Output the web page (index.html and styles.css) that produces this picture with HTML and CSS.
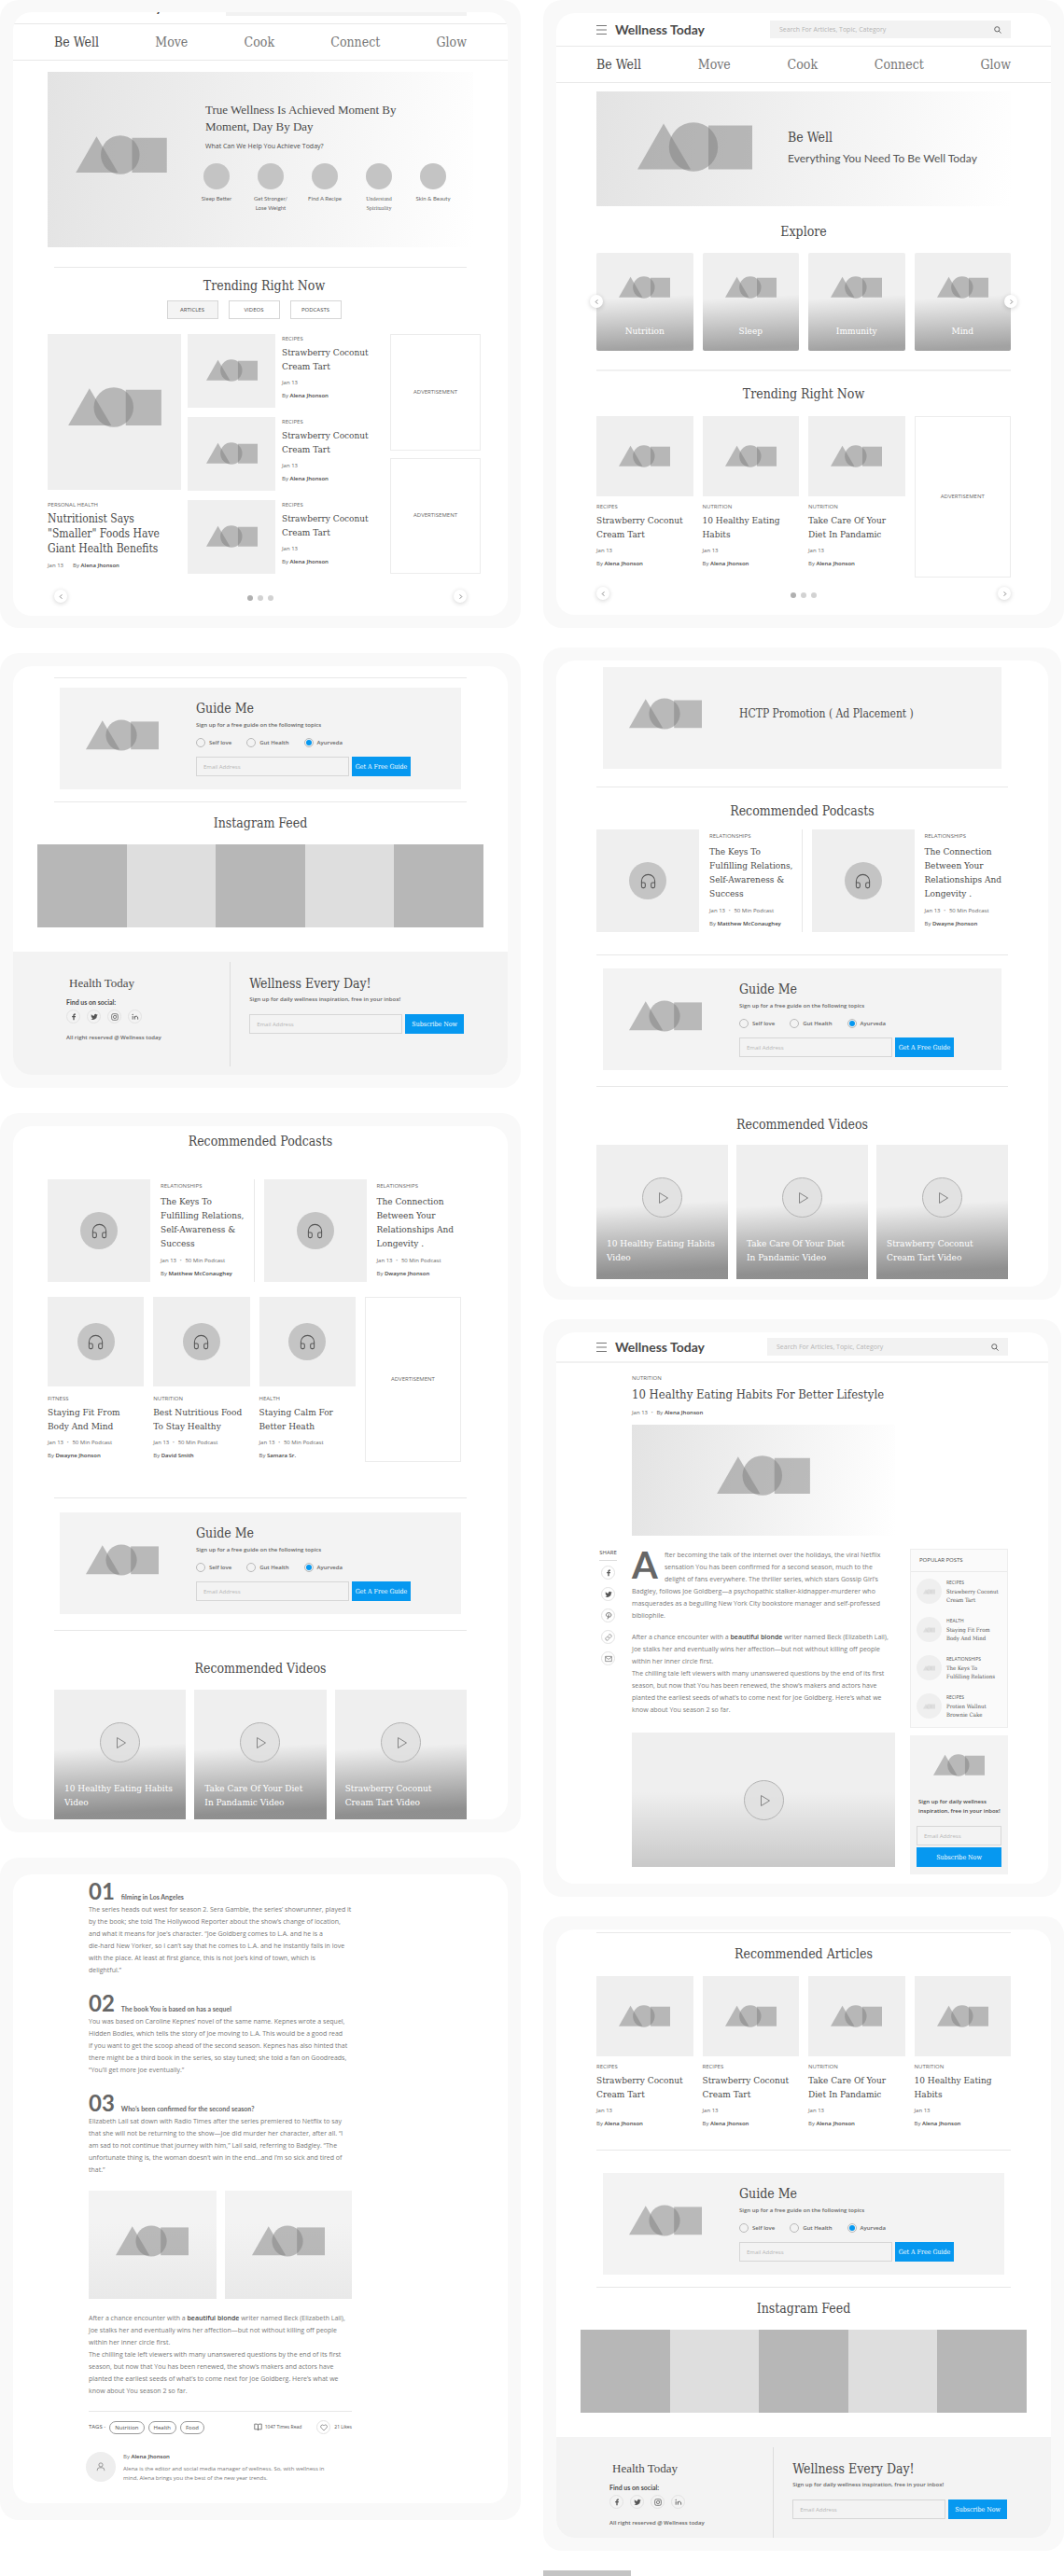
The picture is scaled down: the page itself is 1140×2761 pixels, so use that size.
FILE: index.html
```html
<!DOCTYPE html>
<html lang="en">
<head>
<meta charset="utf-8">
<meta name="viewport" content="width=device-width, initial-scale=1">
<title>Wellness Today</title>
<link rel="stylesheet" href="styles.css">
</head>
<body>
<svg class="sprite" aria-hidden="true">
  <symbol id="shapes" viewBox="0 0 123 53">
    <g fill="#7f7f7f" fill-opacity=".5"><path d="M0 50.500 28 1.500 57 50.500z"/><circle cx="60" cy="26.500" r="26.200"/><path d="M76 3.500h47v47H76z"/></g>
  </symbol>
  <symbol id="headphones" viewBox="0 0 24 24"><path d="M3 18v-6a9 9 0 0 1 18 0v6M21 19a2 2 0 0 1-2 2h-1a2 2 0 0 1-2-2v-3a2 2 0 0 1 2-2h3zM3 19a2 2 0 0 0 2 2h1a2 2 0 0 0 2-2v-3a2 2 0 0 0-2-2H3z" fill="none" stroke="currentColor" stroke-width="1.300"/></symbol>
  <symbol id="play" viewBox="0 0 43 43"><circle cx="21.500" cy="21.500" r="21" fill="#e0e0e0" fill-opacity=".9" stroke="#b3b3b3"/><path d="M18.500 16.500v11l9-5.500z" fill="none" stroke="#858585"/></symbol>
  <symbol id="left" viewBox="0 0 8 8"><path d="M5 1.500 2.500 4 5 6.500" fill="none" stroke="#777"/></symbol>
  <symbol id="right" viewBox="0 0 8 8"><path d="M3 1.500 5.500 4 3 6.500" fill="none" stroke="#777"/></symbol>
  <symbol id="menu" viewBox="0 0 11 10"><path d="M0 .5h11M0 5h11M0 9.500h11" stroke="#777" fill="none"/></symbol>
  <symbol id="search" viewBox="0 0 8 8"><circle cx="3.300" cy="3.300" r="2.600" fill="none" stroke="#555" stroke-width=".9"/><path d="m5.200 5.200 2.400 2.400" stroke="#555" stroke-width=".9"/></symbol>
  <symbol id="facebook" viewBox="0 0 24 24"><path fill="#555" d="M14 22v-9h3.500l.5-4h-4V6.700c0-1.200.4-1.700 1.800-1.700H18V1.400C17.500 1.300 16.400 1.200 15 1.200c-3 0-5 1.700-5 5V9H6.500v4H10v9z"/></symbol>
  <symbol id="twitter" viewBox="0 0 24 24"><path fill="#555" d="M23 4.900a9 9 0 0 1-2.600.7 4.500 4.500 0 0 0 2-2.500 9 9 0 0 1-2.900 1.100 4.500 4.500 0 0 0-7.700 4.100A12.800 12.800 0 0 1 2.500 3.600a4.500 4.500 0 0 0 1.400 6 4.500 4.500 0 0 1-2-.6c0 2.200 1.500 4.100 3.600 4.500a4.500 4.500 0 0 1-2 .1 4.500 4.500 0 0 0 4.200 3.100A9 9 0 0 1 1 18.600 12.800 12.800 0 0 0 20.700 7.200 9 9 0 0 0 23 4.900z"/></symbol>
  <symbol id="instagram" viewBox="0 0 24 24"><g fill="none" stroke="#555" stroke-width="2.200"><rect x="2" y="2" width="20" height="20" rx="5"/><circle cx="12" cy="12" r="4.800"/></g><circle cx="17.500" cy="6.500" r="1.400" fill="#555"/></symbol>
  <symbol id="linkedin" viewBox="0 0 24 24"><path d="M3.500 9v11M10 20V9M10 14.500c0-6 10-7 10 .5v5" fill="none" stroke="#555" stroke-width="2.600"/><circle cx="3.500" cy="4.500" r="1.900" fill="#555"/></symbol>
  <symbol id="pinterest" viewBox="0 0 24 24"><path d="M7 14C1 8 6 2 12.500 2S22 7 20 11.500s-7.500 5.500-8.500 2M13 7 9 22" fill="none" stroke="#555" stroke-width="2.600"/></symbol>
  <symbol id="link" viewBox="0 0 24 24"><path d="M10 13a5 5 0 0 0 7.500.5l3-3a5 5 0 0 0-7-7L11.800 5.200M14 11a5 5 0 0 0-7.500-.5l-3 3a5 5 0 0 0 7 7l1.700-1.700" fill="none" stroke="#666" stroke-width="2"/></symbol>
  <symbol id="mail" viewBox="0 0 24 24"><path d="M2 4h20v16H2zM2 6l10 7.500L22 6" fill="none" stroke="#666" stroke-width="2"/></symbol>
  <symbol id="book" viewBox="0 0 24 24"><path d="M2 3h6a4 4 0 0 1 4 4v14a3 3 0 0 0-3-3H2zM22 3h-6a4 4 0 0 0-4 4v14a3 3 0 0 1 3-3h7z" fill="none" stroke="#666" stroke-width="2.200"/></symbol>
  <symbol id="heart" viewBox="0 0 24 24"><path d="M20.800 4.600a5.500 5.500 0 0 0-7.700 0L12 5.700l-1.100-1.100a5.500 5.500 0 0 0-7.700 7.800L12 21.200l8.800-8.800a5.500 5.500 0 0 0 0-7.800z" fill="none" stroke="#666" stroke-width="2"/></symbol>
  <symbol id="user" viewBox="0 0 24 24"><path d="M3 22v-2a6 6 0 0 1 6-6h6a6 6 0 0 1 6 6v2" fill="none" stroke="#888" stroke-width="2"/><circle cx="12" cy="7" r="5" fill="none" stroke="#888" stroke-width="2"/></symbol>
</svg>

<main class="board">
<div class="column column--left">

  <section class="frame"><div class="screen pb-14">
    <header class="topbar topbar--scrolled">
      <button class="menu" aria-label="Menu"><svg><use href="#menu"/></svg></button>
      <span class="logo">Wellness Today</span>
      <div class="search" role="presentation"></div>
    </header>
    <nav class="nav"><a class="active" href="#">Be Well</a><a href="#">Move</a><a href="#">Cook</a><a href="#">Connect</a><a href="#">Glow</a></nav>
    <div class="hero hero--home">
      <div class="hero-art"><svg class="art"><use href="#shapes"/></svg></div>
      <div class="hero-text">
        <h1 class="display">True Wellness Is Achieved Moment By<br>Moment, Day By Day</h1>
        <p class="lead">What Can We Help You Achieve Today?</p>
        <ul class="goals">
          <li><i></i>Sleep Better</li>
          <li><i></i>Get Stronger/<br>Lose Weight</li>
          <li><i></i>Find A Recipe</li>
          <li class="serif"><i></i>Understand<br>Spirituality</li>
          <li><i></i>Skin &amp; Beauty</li>
        </ul>
      </div>
    </div>
    <hr class="mt-21">
    <h2 class="mt-9 shift">Trending Right Now</h2>
    <div class="tabs"><button class="on">ARTICLES</button><button>VIDEOS</button><button>PODCASTS</button></div>
    <div class="trending">
      <article class="card card--lead">
        <div class="thumb"><svg class="art art--lg"><use href="#shapes"/></svg></div>
        <p class="tag">PERSONAL HEALTH</p>
        <h3>Nutritionist Says<br>"Smaller" Foods Have<br>Giant Health Benefits</h3>
        <p class="meta"><span class="date">Jan 13</span>By <b>Alena Jhonson</b></p>
      </article>
      <div class="stack">
        <article class="side"><div class="thumb"><svg class="art art--sm"><use href="#shapes"/></svg></div><div class="card"><p class="tag">RECIPES</p><h3>Strawberry Coconut<br>Cream Tart</h3><p class="meta">Jan 13</p><p class="meta">By <b>Alena Jhonson</b></p></div></article>
        <article class="side"><div class="thumb"><svg class="art art--sm"><use href="#shapes"/></svg></div><div class="card"><p class="tag">RECIPES</p><h3>Strawberry Coconut<br>Cream Tart</h3><p class="meta">Jan 13</p><p class="meta">By <b>Alena Jhonson</b></p></div></article>
        <article class="side"><div class="thumb"><svg class="art art--sm"><use href="#shapes"/></svg></div><div class="card"><p class="tag">RECIPES</p><h3>Strawberry Coconut<br>Cream Tart</h3><p class="meta">Jan 13</p><p class="meta">By <b>Alena Jhonson</b></p></div></article>
      </div>
      <div class="ads"><aside class="ad">ADVERTISEMENT</aside><aside class="ad">ADVERTISEMENT</aside></div>
    </div>
    <div class="pager mt-17"><button class="round" aria-label="Previous"><svg><use href="#left"/></svg></button><span class="dots"><i class="on"></i><i></i><i></i></span><button class="round" aria-label="Next"><svg><use href="#right"/></svg></button></div>
  </div></section>

  <section class="frame"><div class="screen">
    <hr class="mt-12">
    <form class="guide mt-10">
      <svg class="art art--md"><use href="#shapes"/></svg>
      <div class="guide-body">
        <h2>Guide Me</h2>
        <p class="small">Sign up for a free guide on the following topics</p>
        <div class="radios"><label><input type="radio" name="topic1">Self love</label><label><input type="radio" name="topic1">Gut Health</label><label><input type="radio" name="topic1" checked>Ayurveda</label></div>
        <div class="field"><input type="email" placeholder="Email Address" aria-label="Email Address"><button>Get A Free Guide</button></div>
      </div>
    </form>
    <hr class="mt-13">
    <h2 class="mt-12">Instagram Feed</h2>
    <div class="feed"><i></i><i></i><i></i><i></i><i></i></div>
    <footer class="footer">
      <div class="footer-brand">
        <p class="brand">Health Today</p>
        <p class="find">Find us on social:</p>
        <div class="social"><a href="#" aria-label="Facebook"><svg><use href="#facebook"/></svg></a><a href="#" aria-label="Twitter"><svg><use href="#twitter"/></svg></a><a href="#" aria-label="Instagram"><svg><use href="#instagram"/></svg></a><a href="#" aria-label="LinkedIn"><svg><use href="#linkedin"/></svg></a></div>
        <p class="small">All right reserved @ Wellness today</p>
      </div>
      <form class="footer-news">
        <h2>Wellness Every Day!</h2>
        <p class="small">Sign up for daily wellness inspiration, free in your inbox!</p>
        <div class="field"><input type="email" placeholder="Email Address" aria-label="Email Address"><button>Subscribe Now</button></div>
      </form>
    </footer>
  </div></section>

  <section class="frame"><div class="screen">
    <h2 class="mt-6">Recommended Podcasts</h2>
    <div class="podcasts podcasts--wide mt-31">
      <article class="podcast"><div class="thumb"><span class="disc"><svg><use href="#headphones"/></svg></span></div><div class="card"><p class="tag">RELATIONSHIPS</p><h3>The Keys To<br>Fulfilling Relations,<br>Self-Awareness &amp;<br>Success</h3><p class="meta">Jan 13 <s>•</s> 50 Min Podcast</p><p class="meta">By <b>Matthew McConaughey</b></p></div></article>
      <article class="podcast"><div class="thumb"><span class="disc"><svg><use href="#headphones"/></svg></span></div><div class="card"><p class="tag">RELATIONSHIPS</p><h3>The Connection<br>Between Your<br>Relationships And<br>Longevity .</h3><p class="meta">Jan 13 <s>•</s> 50 Min Podcast</p><p class="meta">By <b>Dwayne Jhonson</b></p></div></article>
    </div>
    <div class="cards cards--podcasts">
      <article class="card"><div class="thumb"><span class="disc"><svg><use href="#headphones"/></svg></span></div><p class="tag">FITNESS</p><h3>Staying Fit From<br>Body And Mind</h3><p class="meta">Jan 13 <s>•</s> 50 Min Podcast</p><p class="meta">By <b>Dwayne Jhonson</b></p></article>
      <article class="card"><div class="thumb"><span class="disc"><svg><use href="#headphones"/></svg></span></div><p class="tag">NUTRITION</p><h3>Best Nutritious Food<br>To Stay Healthy</h3><p class="meta">Jan 13 <s>•</s> 50 Min Podcast</p><p class="meta">By <b>David Smith</b></p></article>
      <article class="card"><div class="thumb"><span class="disc"><svg><use href="#headphones"/></svg></span></div><p class="tag">HEALTH</p><h3>Staying Calm For<br>Better Heath</h3><p class="meta">Jan 13 <s>•</s> 50 Min Podcast</p><p class="meta">By <b>Samara Sr.</b></p></article>
      <aside class="ad">ADVERTISEMENT</aside>
    </div>
    <hr class="mt-38">
    <form class="guide mt-15">
      <svg class="art art--md"><use href="#shapes"/></svg>
      <div class="guide-body">
        <h2>Guide Me</h2>
        <p class="small">Sign up for a free guide on the following topics</p>
        <div class="radios"><label><input type="radio" name="topic2">Self love</label><label><input type="radio" name="topic2">Gut Health</label><label><input type="radio" name="topic2" checked>Ayurveda</label></div>
        <div class="field"><input type="email" placeholder="Email Address" aria-label="Email Address"><button>Get A Free Guide</button></div>
      </div>
    </form>
    <hr class="mt-17">
    <h2 class="mt-30">Recommended Videos</h2>
    <div class="videos videos--short">
      <a href="#" class="video"><svg class="play"><use href="#play"/></svg><span>10 Healthy Eating Habits<br>Video</span></a>
      <a href="#" class="video"><svg class="play"><use href="#play"/></svg><span>Take Care Of Your Diet<br>In Pandamic Video</span></a>
      <a href="#" class="video"><svg class="play"><use href="#play"/></svg><span>Strawberry Coconut<br>Cream Tart Video</span></a>
    </div>
  </div></section>

  <section class="frame frame--tall"><div class="screen story">
    <h4><em>01</em>filming in Los Angeles</h4>
    <p>The series heads out west for season 2. Sera Gamble, the series’ showrunner, played it<br>by the book; she told The Hollywood Reporter about the show’s change of location,<br>and what it means for Joe’s character. “Joe Goldberg comes to L.A. and he is a<br>die-hard New Yorker, so I can’t say that he comes to L.A. and he instantly falls in love<br>with the place. At least at first glance, this is not Joe’s kind of town, which is<br>delightful.”</p>
    <h4><em>02</em>The book You is based on has a sequel</h4>
    <p>You was based on Caroline Kepnes’ novel of the same name. Kepnes wrote a sequel,<br>Hidden Bodies, which tells the story of Joe moving to L.A. This would be a good read<br>if you want to get the scoop ahead of the second season. Kepnes has also hinted that<br>there might be a third book in the series, so stay tuned; she told a fan on Goodreads,<br>“You’ll get more Joe eventually.”</p>
    <h4><em>03</em>Who’s been confirmed for the second season?</h4>
    <p>Elizabeth Lail sat down with Radio Times after the series premiered to Netflix to say<br>that she will not be returning to the show—Joe did murder her character, after all. “I<br>am sad to not continue that journey with him,” Lail said, referring to Badgley. “The<br>unfortunate thing is, the woman doesn’t win in the end...and I’m so sick and tired of<br>that.”</p>
    <div class="pair"><div><svg class="art art--md"><use href="#shapes"/></svg></div><div><svg class="art art--md"><use href="#shapes"/></svg></div></div>
    <p>After a chance encounter with a <b>beautiful blonde</b> writer named Beck (Elizabeth Lail),<br>Joe stalks her and eventually wins her affection—but not without killing off people<br>within her inner circle first.<br>The chilling tale left viewers with many unanswered questions by the end of its first<br>season, but now that You has been renewed, the show’s makers and actors have<br>planted the earliest seeds of what’s to come next for Joe Goldberg. Here’s what we<br>know about You season 2 so far.</p>
    <div class="tagline">
      <span>TAGS -</span><a href="#" class="pill">Nutrition</a><a href="#" class="pill">Health</a><a href="#" class="pill">Food</a>
      <span class="reads"><svg><use href="#book"/></svg>1047 Times Read</span>
      <button class="like" aria-label="Like"><svg><use href="#heart"/></svg></button><span class="likes">21 Likes</span>
    </div>
    <div class="author">
      <span class="avatar"><svg><use href="#user"/></svg></span>
      <div><p class="by">By <b>Alena Jhonson</b></p><p class="bio">Alena is the editor and social media manager of wellness. So, with wellness in<br>mind, Alena brings you the best of the new year trends.</p></div>
    </div>
  </div></section>
</div>

<div class="column column--right">

  <section class="frame"><div class="screen pb-16">
    <header class="topbar">
      <button class="menu" aria-label="Menu"><svg><use href="#menu"/></svg></button>
      <span class="logo">Wellness Today</span>
      <label class="search"><input type="search" placeholder="Search For Articles, Topic, Category" aria-label="Search"><svg><use href="#search"/></svg></label>
    </header>
    <nav class="nav"><a class="active" href="#">Be Well</a><a href="#">Move</a><a href="#">Cook</a><a href="#">Connect</a><a href="#">Glow</a></nav>
    <div class="hero hero--topic">
      <svg class="art art--xl"><use href="#shapes"/></svg>
      <div><h1 class="slab">Be Well</h1><p class="subtitle">Everything You Need To Be Well Today</p></div>
    </div>
    <h2 class="mt-17">Explore</h2>
    <div class="explore">
      <button class="round" aria-label="Previous"><svg><use href="#left"/></svg></button>
      <a href="#" class="topic"><svg class="art art--sm"><use href="#shapes"/></svg><span>Nutrition</span></a>
      <a href="#" class="topic"><svg class="art art--sm"><use href="#shapes"/></svg><span>Sleep</span></a>
      <a href="#" class="topic"><svg class="art art--sm"><use href="#shapes"/></svg><span>Immunity</span></a>
      <a href="#" class="topic"><svg class="art art--sm"><use href="#shapes"/></svg><span>Mind</span></a>
      <button class="round round--next" aria-label="Next"><svg><use href="#right"/></svg></button>
    </div>
    <hr class="mt-20 thick">
    <h2 class="mt-14">Trending Right Now</h2>
    <div class="cards">
      <article class="card"><div class="thumb"><svg class="art art--sm"><use href="#shapes"/></svg></div><p class="tag">RECIPES</p><h3>Strawberry Coconut<br>Cream Tart</h3><p class="meta">Jan 13</p><p class="meta">By <b>Alena Jhonson</b></p></article>
      <article class="card"><div class="thumb"><svg class="art art--sm"><use href="#shapes"/></svg></div><p class="tag">NUTRITION</p><h3>10 Healthy Eating<br>Habits</h3><p class="meta">Jan 13</p><p class="meta">By <b>Alena Jhonson</b></p></article>
      <article class="card"><div class="thumb"><svg class="art art--sm"><use href="#shapes"/></svg></div><p class="tag">NUTRITION</p><h3>Take Care Of Your<br>Diet In Pandamic</h3><p class="meta">Jan 13</p><p class="meta">By <b>Alena Jhonson</b></p></article>
      <aside class="ad">ADVERTISEMENT</aside>
    </div>
    <div class="pager mt-10"><button class="round" aria-label="Previous"><svg><use href="#left"/></svg></button><span class="dots"><i class="on"></i><i></i><i></i></span><button class="round" aria-label="Next"><svg><use href="#right"/></svg></button></div>
  </div></section>

  <section class="frame frame--narrow"><div class="screen pb-8">
    <aside class="promo"><svg class="art art--md"><use href="#shapes"/></svg><h3>HCTP Promotion ( Ad Placement )</h3></aside>
    <hr class="mt-19">
    <h2 class="mt-15">Recommended Podcasts</h2>
    <div class="podcasts mt-10">
      <article class="podcast"><div class="thumb"><span class="disc"><svg><use href="#headphones"/></svg></span></div><div class="card"><p class="tag">RELATIONSHIPS</p><h3>The Keys To<br>Fulfilling Relations,<br>Self-Awareness &amp;<br>Success</h3><p class="meta">Jan 13 <s>•</s> 50 Min Podcast</p><p class="meta">By <b>Matthew McConaughey</b></p></div></article>
      <article class="podcast"><div class="thumb"><span class="disc"><svg><use href="#headphones"/></svg></span></div><div class="card"><p class="tag">RELATIONSHIPS</p><h3>The Connection<br>Between Your<br>Relationships And<br>Longevity .</h3><p class="meta">Jan 13 <s>•</s> 50 Min Podcast</p><p class="meta">By <b>Dwayne Jhonson</b></p></div></article>
    </div>
    <hr class="mt-24">
    <form class="guide mt-14">
      <svg class="art art--md"><use href="#shapes"/></svg>
      <div class="guide-body">
        <h2>Guide Me</h2>
        <p class="small">Sign up for a free guide on the following topics</p>
        <div class="radios"><label><input type="radio" name="topic3">Self love</label><label><input type="radio" name="topic3">Gut Health</label><label><input type="radio" name="topic3" checked>Ayurveda</label></div>
        <div class="field"><input type="email" placeholder="Email Address" aria-label="Email Address"><button>Get A Free Guide</button></div>
      </div>
    </form>
    <hr class="mt-17">
    <h2 class="mt-30">Recommended Videos</h2>
    <div class="videos">
      <a href="#" class="video"><svg class="play"><use href="#play"/></svg><span>10 Healthy Eating Habits<br>Video</span></a>
      <a href="#" class="video"><svg class="play"><use href="#play"/></svg><span>Take Care Of Your Diet<br>In Pandamic Video</span></a>
      <a href="#" class="video"><svg class="play"><use href="#play"/></svg><span>Strawberry Coconut<br>Cream Tart Video</span></a>
    </div>
  </div></section>

  <section class="frame frame--narrow"><div class="screen pb-10">
    <header class="topbar topbar--slim">
      <button class="menu" aria-label="Menu"><svg><use href="#menu"/></svg></button>
      <span class="logo">Wellness Today</span>
      <label class="search"><input type="search" placeholder="Search For Articles, Topic, Category" aria-label="Search"><svg><use href="#search"/></svg></label>
    </header>
    <div class="article-head">
      <p class="tag">NUTRITION</p>
      <h1 class="slab">10 Healthy Eating Habits For Better Lifestyle</h1>
      <p class="meta">Jan 13 <s>•</s> By <b>Alena Jhonson</b></p>
      <div class="hero hero--article"><svg class="art art--lg"><use href="#shapes"/></svg></div>
    </div>
    <div class="article-grid">
      <div class="share"><span>SHARE</span><a href="#" aria-label="Facebook"><svg><use href="#facebook"/></svg></a><a href="#" aria-label="Twitter"><svg><use href="#twitter"/></svg></a><a href="#" aria-label="Pinterest"><svg><use href="#pinterest"/></svg></a><a href="#" aria-label="Copy link"><svg><use href="#link"/></svg></a><a href="#" aria-label="Email"><svg><use href="#mail"/></svg></a></div>
      <div class="prose">
        <p><span class="dropcap">A</span>fter becoming the talk of the internet over the holidays, the viral Netflix<br>sensation You has been confirmed for a second season, much to the<br>delight of fans everywhere. The thriller series, which stars Gossip Girl’s<br>Badgley, follows Joe Goldberg—a psychopathic stalker-kidnapper-murderer who<br>masquerades as a beguiling New York City bookstore manager and self-professed<br>bibliophile.</p>
        <p>After a chance encounter with a <b>beautiful blonde</b> writer named Beck (Elizabeth Lail),<br>Joe stalks her and eventually wins her affection—but not without killing off people<br>within her inner circle first.<br>The chilling tale left viewers with many unanswered questions by the end of its first<br>season, but now that You has been renewed, the show’s makers and actors have<br>planted the earliest seeds of what’s to come next for Joe Goldberg. Here’s what we<br>know about You season 2 so far.</p>
        <a href="#" class="video video--article" aria-label="Play video"><svg class="play"><use href="#play"/></svg></a>
      </div>
      <aside class="sidebar">
        <div class="popular">
          <h4>POPULAR POSTS</h4>
          <ul>
            <li><span class="mini"><svg><use href="#shapes"/></svg></span><p><small>RECIPES</small>Strawberry Coconut<br>Cream Tart</p></li>
            <li><span class="mini"><svg><use href="#shapes"/></svg></span><p><small>HEALTH</small>Staying Fit From<br>Body And Mind</p></li>
            <li><span class="mini"><svg><use href="#shapes"/></svg></span><p><small>RELATIONSHIPS</small>The Keys To<br>Fulfilling Relations</p></li>
            <li><span class="mini"><svg><use href="#shapes"/></svg></span><p><small>RECIPES</small>Protien Wallnut<br>Brownie Cake</p></li>
          </ul>
        </div>
        <form class="signup">
          <svg class="art art--sm"><use href="#shapes"/></svg>
          <p>Sign up for daily wellness<br>inspiration, free in your inbox!</p>
          <div class="field field--stack"><input type="email" placeholder="Email Address" aria-label="Email Address"><button>Subscribe Now</button></div>
        </form>
      </aside>
    </div>
  </div></section>

  <section class="frame"><div class="screen">
    <hr class="mt-3">
    <h2 class="mt-12">Recommended Articles</h2>
    <div class="cards">
      <article class="card"><div class="thumb"><svg class="art art--sm"><use href="#shapes"/></svg></div><p class="tag">RECIPES</p><h3>Strawberry Coconut<br>Cream Tart</h3><p class="meta">Jan 13</p><p class="meta">By <b>Alena Jhonson</b></p></article>
      <article class="card"><div class="thumb"><svg class="art art--sm"><use href="#shapes"/></svg></div><p class="tag">RECIPES</p><h3>Strawberry Coconut<br>Cream Tart</h3><p class="meta">Jan 13</p><p class="meta">By <b>Alena Jhonson</b></p></article>
      <article class="card"><div class="thumb"><svg class="art art--sm"><use href="#shapes"/></svg></div><p class="tag">NUTRITION</p><h3>Take Care Of Your<br>Diet In Pandamic</h3><p class="meta">Jan 13</p><p class="meta">By <b>Alena Jhonson</b></p></article>
      <article class="card"><div class="thumb"><svg class="art art--sm"><use href="#shapes"/></svg></div><p class="tag">NUTRITION</p><h3>10 Healthy Eating<br>Habits</h3><p class="meta">Jan 13</p><p class="meta">By <b>Alena Jhonson</b></p></article>
    </div>
    <hr class="mt-21">
    <form class="guide mt-24">
      <svg class="art art--md"><use href="#shapes"/></svg>
      <div class="guide-body">
        <h2>Guide Me</h2>
        <p class="small">Sign up for a free guide on the following topics</p>
        <div class="radios"><label><input type="radio" name="topic4">Self love</label><label><input type="radio" name="topic4">Gut Health</label><label><input type="radio" name="topic4" checked>Ayurveda</label></div>
        <div class="field"><input type="email" placeholder="Email Address" aria-label="Email Address"><button>Get A Free Guide</button></div>
      </div>
    </form>
    <hr class="mt-13">
    <h2 class="mt-12">Instagram Feed</h2>
    <div class="feed"><i></i><i></i><i></i><i></i><i></i></div>
    <footer class="footer footer--flush">
      <div class="footer-brand">
        <p class="brand">Health Today</p>
        <p class="find">Find us on social:</p>
        <div class="social"><a href="#" aria-label="Facebook"><svg><use href="#facebook"/></svg></a><a href="#" aria-label="Twitter"><svg><use href="#twitter"/></svg></a><a href="#" aria-label="Instagram"><svg><use href="#instagram"/></svg></a><a href="#" aria-label="LinkedIn"><svg><use href="#linkedin"/></svg></a></div>
        <p class="small">All right reserved @ Wellness today</p>
      </div>
      <form class="footer-news">
        <h2>Wellness Every Day!</h2>
        <p class="small">Sign up for daily wellness inspiration, free in your inbox!</p>
        <div class="field"><input type="email" placeholder="Email Address" aria-label="Email Address"><button>Subscribe Now</button></div>
      </form>
    </footer>
  </div></section>
  <div class="tile"></div>
</div>
</main>
</body>
</html>
```
FILE: styles.css
```css
:root {
  --slab: "DejaVu Serif Condensed", "DejaVu Serif", serif;
  --sans: "Open Sans", "Noto Sans", sans-serif;
  --display: Lato, "Open Sans", sans-serif;
  --ink: #4a4a4a;
  --mid: #777;
  --line: #e8e8e8;
  --thumb: #efefef;
  --blue: #0698f0;
  --pad: 44px;
}

* { box-sizing: border-box; }
body { margin: 0; background: #fff; color: var(--ink); font: 7px/13px var(--sans); }
h1, h2, h3, h4, p, ul { margin: 0; padding: 0; font-weight: 400; }
ul { list-style: none; }
a { color: inherit; text-decoration: none; }
button, input { font: inherit; color: inherit; margin: 0; padding: 0; border: 0; background: none; }
button { cursor: pointer; white-space: nowrap; }
em, i { font-style: normal; }
s { text-decoration: none; color: #aaa; margin: 0 2px; }
b { font-weight: 600; color: #444; }
svg { display: block; }
.sprite { position: absolute; width: 0; height: 0; }

/* board */
.board { display: grid; grid-template-columns: minmax(0, 1fr) minmax(0, 1fr); gap: 24px; align-items: start; }
.column { display: flex; flex-direction: column; }
.column--left { gap: 27px; }
.column--right { gap: 21px; --pad: 43px; }
.frame { background: #f9f9f9; border-radius: 20px; padding: 14px; }
.column--left .frame:first-child { padding: 13px 14px; }
.frame--narrow { margin-right: 3px; }
.frame--tall { padding: 18px 14px; }
.screen { background: #fff; border-radius: 20px; overflow: hidden; display: flow-root; }
.tile { width: 94px; height: 6px; background: #c4c4c4; }

/* spacing steps */
.mt-3 { margin-top: 3px; } .mt-6 { margin-top: 6px; } .mt-9 { margin-top: 9px; }
.mt-10 { margin-top: 10px; } .mt-12 { margin-top: 12px; } .mt-13 { margin-top: 13px; }
.mt-14 { margin-top: 14px; } .mt-15 { margin-top: 15px; } .mt-17 { margin-top: 17px; }
.mt-19 { margin-top: 19px; } .mt-20 { margin-top: 20px; } .mt-21 { margin-top: 21px; }
.mt-24 { margin-top: 24px; } .mt-30 { margin-top: 30px; } .mt-31 { margin-top: 31px; }
.mt-38 { margin-top: 38px; }
.pb-8 { padding-bottom: 8px; } .pb-10 { padding-bottom: 10px; }
.pb-14 { padding-bottom: 14px; } .pb-16 { padding-bottom: 16px; }

hr { height: 1px; border: 0; background: var(--line); margin-bottom: 0; margin-left: var(--pad); margin-right: var(--pad); }
hr.thick { height: 2px; background: #f1f1f1; }
h2 { font: 14px/20px var(--slab); text-align: center; }
h2.shift { padding-left: 8px; }
h3 { font: 10px/15px var(--slab); white-space: nowrap; }

/* header */
.topbar { height: 36px; padding: 0 var(--pad); display: flex; align-items: center; border-bottom: 1px solid var(--line); }
.topbar--scrolled { margin-top: -23px; }
.topbar--slim { height: 33px; border-bottom: 2px solid #f1f1f1; }
.menu svg { width: 11px; height: 10px; }
.logo { font: 700 14px/20px var(--display); margin-left: 9px; }
.search { margin-left: auto; width: 258px; height: 19px; background: #f2f2f2; display: flex; align-items: center; padding: 0 10px; }
.search input { flex: 1; min-width: 0; outline: 0; appearance: none; }
.search svg { width: 8px; height: 8px; }
::placeholder { color: #b5b5b5; opacity: 1; }
.nav { height: 39px; padding: 0 var(--pad); display: flex; justify-content: space-between; align-items: center; border-bottom: 1px solid var(--line); font: 14px/20px var(--slab); color: var(--mid); }
.nav .active { color: var(--ink); }

/* artwork */
.art { width: 98px; height: 42px; flex: none; }
.art--xl { width: 123px; height: 53px; }
.art--lg { width: 100px; height: 43px; }
.art--md { width: 78px; height: 34px; }
.art--sm { width: 55px; height: 24px; }

/* heroes */
.hero { background: linear-gradient(98deg, #e3e3e3, #fff); }
.hero--home { margin: 12px 37px 0; height: 188px; display: grid; grid-template-columns: 152px 1fr; }
.hero-art { padding: 68px 0 0 30px; }
.hero-text { padding: 32px 14px 0 0; }
.display { font: 13px/18px "Liberation Serif", serif; padding-left: 17px; }
.lead { line-height: 12px; margin-top: 6px; padding-left: 17px; }
.goals { display: grid; grid-template-columns: repeat(5, 1fr); margin-top: 12px; text-align: center; font: 6px/10px var(--display); color: #666; }
.goals i { display: block; width: 28px; height: 28px; border-radius: 50%; background: #c4c4c4; margin: 0 auto 5px; }
.goals .serif { font-family: "Liberation Serif", serif; }
.hero--topic { margin: 9px var(--pad) 0; height: 123px; padding: 33px 0 0 44px; display: flex; gap: 38px; }
.hero--topic > div { padding-top: 6px; }
.slab { font: 14px/20px var(--slab); }
.subtitle { font: 12px/16px var(--display); margin-top: 5px; color: #555; }

.tabs { display: flex; justify-content: center; gap: 11px; margin: 6px 14px 0 0; }
.tabs button { width: 55px; height: 20px; border: 1px solid #d6d6d6; font-size: 6px; }
.tabs .on { background: #f4f4f4; }

/* cards */
.thumb { background: var(--thumb); display: flex; align-items: center; justify-content: center; }
.tag { font-size: 6px; line-height: 10px; color: #666; white-space: nowrap; }
.card h3 { margin: 2px 0 3px; }
.meta { font-size: 6px; line-height: 14px; color: #666; white-space: nowrap; }
.date { margin-right: 10px; }
.ad { border: 1px solid #ececec; display: flex; align-items: center; justify-content: center; font-size: 6px; color: #666; }

.trending { display: grid; grid-template-columns: 143fr 210fr 97fr; gap: 7px; margin: 16px 29px 0 37px; }
.card--lead .thumb { height: 167px; padding-bottom: 10px; }
.card--lead .tag { margin-top: 11px; }
.card--lead h3 { font-size: 12px; line-height: 16px; }
.stack { display: grid; gap: 10px; }
.side { display: grid; grid-template-columns: 94fr 109fr; gap: 7px; }
.side .thumb { height: 79px; padding-bottom: 2px; }
.ads { display: grid; grid-template-rows: 1fr 1fr; gap: 8px; }

.cards { display: grid; grid-template-columns: repeat(4, minmax(0, 1fr)); gap: 10px; margin: 14px var(--pad) 0; }
.cards .thumb { height: 86px; }
.cards .tag { margin-top: 6px; }
.cards .ad { min-height: 173px; }
.cards--podcasts { margin: 16px 50px 0 37px; }
.cards--podcasts .thumb { height: 96px; }
.cards--podcasts .tag { margin-top: 8px; }

.podcasts { display: grid; grid-template-columns: 1fr 1fr; margin-left: var(--pad); margin-right: 43px; }
.podcasts--wide { margin-left: 37px; margin-right: 50px; }
.podcast { display: flex; gap: 11px; }
.podcast:first-child { border-right: 1px solid var(--line); }
.podcast + .podcast { padding-left: 10px; }
.podcast .thumb { width: 110px; height: 110px; flex: none; }
.podcast .card { padding-top: 2px; }
.podcast h3 { margin: 4px 0; }
.disc { width: 40px; height: 40px; border-radius: 50%; background: #c4c4c4; color: #555; display: flex; align-items: center; justify-content: center; }
.disc svg { width: 19px; height: 19px; }

/* pager */
.pager { display: flex; align-items: center; justify-content: space-between; padding: 0 var(--pad); }
.round { width: 14px; height: 14px; border-radius: 50%; background: #fff; box-shadow: 0 1px 5px rgba(0, 0, 0, .18); display: flex; align-items: center; justify-content: center; }
.round svg { width: 7px; height: 7px; }
.dots { display: flex; gap: 5px; padding-top: 4px; }
.dots i { width: 6px; height: 6px; border-radius: 50%; background: #d2d2d2; }
.dots .on { background: #b0b0b0; }

/* explore */
.explore { position: relative; display: grid; grid-template-columns: repeat(4, 1fr); gap: 10px; margin: 13px var(--pad) 0; }
.explore .round { position: absolute; top: 45px; left: -7px; z-index: 1; }
.explore .round--next { left: auto; right: -7px; }
.topic { height: 105px; border-radius: 2px; padding: 25px 0 14px; display: flex; flex-direction: column; align-items: center; justify-content: space-between; color: #fff; font: 10px/14px var(--slab); background: linear-gradient(177deg, transparent 45%, rgba(0, 0, 0, .32) 95%) var(--thumb); }

/* guide */
.guide { margin-left: 50px; margin-right: 50px; background: #f3f3f3; display: flex; align-items: center; padding: 12px 0 14px 28px; gap: 40px; }
.guide h2, .footer h2 { text-align: left; }
.small { font-size: 6px; line-height: 12px; color: #666; white-space: nowrap; font-weight: 600; }
.guide .small { margin-top: 2px; }
.guide .art { margin-bottom: 5px; }
.radios { display: flex; gap: 16px; margin-top: 7px; }
.radios label { display: flex; align-items: center; gap: 4px; height: 12px; font-size: 6px; font-weight: 600; color: #666; }
.radios input { appearance: none; width: 10px; height: 10px; border: 1px solid #b9b9b9; border-radius: 50%; padding: 1px; }
.radios input:checked { background: var(--blue); background-clip: content-box; }
.field { display: flex; gap: 3px; margin-top: 9px; }
.field input { width: 164px; height: 21px; border: 1px solid #d6d6d6; padding: 0 7px; outline: 0; font-size: 6px; }
.field button { width: 63px; height: 21px; background: var(--blue); color: #fff; font: 7px/12px var(--slab); }
.field--stack { flex-direction: column; gap: 2px; }
.field--stack input, .field--stack button { width: 100%; }

.feed { display: grid; grid-template-columns: repeat(5, 1fr); height: 89px; margin: 13px 26px 26px; }
.feed i { background: #b7b7b7; }
.feed i:nth-child(even) { background: #dedede; }

/* footer */
.footer { background: #f3f3f3; display: flex; padding: 11px 0 9px; }
.footer--flush { padding-bottom: 0; }
.footer-brand { width: 44%; padding: 13px 0 0 57px; border-right: 1px solid #dcdcdc; height: 112px; }
.footer--flush .footer-brand { height: 97px; }
.brand { font: 13px/20px "Liberation Serif", serif; padding-left: 3px; }
.find { font: 700 7px/12px var(--display); margin-top: 4px; }
.social { display: flex; gap: 7px; margin: 2px 0 9px; }
.social a, .share a, .like { width: 15px; height: 15px; border: 1px solid #e2e2e2; border-radius: 50%; display: flex; align-items: center; justify-content: center; }
.social svg, .share svg, .like svg { width: 8px; height: 8px; }
.footer-news { padding: 13px 0 0 20px; }
.footer-news .small { margin-top: 1px; }
.footer-news .field { margin-top: 10px; }

/* videos */
.videos { display: grid; grid-template-columns: repeat(3, 1fr); gap: 9px; margin: 12px var(--pad) 0; }
.video { height: 144px; padding: 35px 11px 0; display: flex; flex-direction: column; gap: 20px; color: #fff; font: 10px/15px var(--slab); white-space: nowrap; background: linear-gradient(177deg, transparent 44%, rgba(0, 0, 0, .4) 92%) var(--thumb); }
.videos--short { margin-top: 13px; }
.videos--short .video { height: 139px; }
.play { width: 43px; height: 43px; align-self: center; }
.video--article { margin-top: 18px; padding-top: 51px; background: linear-gradient(transparent 44%, rgba(0, 0, 0, .16)) var(--thumb); }

.promo { margin: 7px 50px 0; height: 109px; background: #f3f3f3; display: flex; align-items: center; gap: 40px; padding: 0 0 9px 28px; }
.promo h3 { font-size: 12px; }

/* article */
.article-head { padding: 11px 164px 0 81px; }
.article-head .slab { font-size: 13px; margin: 3px 0; white-space: nowrap; }
.article-head .meta { line-height: 12px; }
.hero--article { height: 119px; margin-top: 7px; display: flex; justify-content: center; align-items: center; padding-bottom: 10px; }
.article-grid { display: grid; grid-template-columns: 19px minmax(0, 1fr) 105px; gap: 16px; padding: 14px 43px 0 46px; align-items: start; }
.share { display: flex; flex-direction: column; align-items: center; gap: 8px; }
.share span { font-size: 6px; line-height: 8px; padding-bottom: 4px; margin-bottom: -3px; border-bottom: 1px solid #ddd; }
.prose p, .story p { white-space: nowrap; color: var(--mid); }
.prose p + p { margin-top: 10px; }
.dropcap { float: left; width: 35px; height: 39px; font: 700 40px/34px var(--display); color: #666; }
.sidebar { display: grid; gap: 8px; }
.popular { border: 1px solid #eee; background: #fafafa; }
.popular h4 { font-size: 6px; line-height: 23px; padding-left: 9px; border-bottom: 1px solid #eaeaea; }
.popular ul { display: grid; gap: 14px; padding: 7px 6px 9px; }
.popular li { display: flex; gap: 5px; }
.popular li p { font: 6px/9px var(--slab); color: #555; white-space: nowrap; }
.popular small { display: block; font: 5px/9px var(--sans); }
.mini { width: 27px; height: 27px; border-radius: 50%; background: #efefef; display: flex; align-items: center; justify-content: center; flex: none; }
.mini svg { width: 13px; height: 6px; opacity: .3; }
.signup { background: #f3f3f3; padding: 20px 7px 8px; }
.signup .art { margin: 0 auto 22px; }
.signup p { font-size: 6px; font-weight: 600; line-height: 10px; padding-left: 2px; white-space: nowrap; }
.signup .field { margin-top: 11px; }

/* story */
.story { padding: 6px 167px 22px 81px; }
.story h4 { display: flex; align-items: baseline; gap: 7px; font: 700 7px/8px var(--display); color: #666; }
.story h4 em { font-size: 24px; line-height: 24px; }
.story p + h4 { margin-top: 17px; }
.story h4 + p { margin-top: 1px; }
.pair { display: grid; grid-template-columns: 1fr 1fr; gap: 9px; margin: 16px 0 14px; }
.pair div { height: 116px; padding-bottom: 8px; display: flex; align-items: center; justify-content: center; background: linear-gradient(#f3f3f3 30%, #e9e9e9); }
.tagline { display: flex; align-items: center; gap: 4px; border-top: 1px solid var(--line); margin-top: 15px; padding-top: 9px; font-size: 6px; line-height: 13px; white-space: nowrap; }
.pill { border: 1px solid #999; border-radius: 7px; height: 14px; line-height: 12px; padding: 0 5px; }
.reads { margin-left: auto; display: flex; align-items: center; gap: 3px; font-size: 5px; }
.reads svg { width: 9px; height: 9px; }
.like { margin-left: 12px; }
.likes { font-size: 5px; }
.author { display: flex; gap: 8px; margin: 19px 0 0 -3px; }
.avatar { width: 32px; height: 32px; border-radius: 50%; background: #eee; flex: none; display: flex; align-items: center; justify-content: center; }
.avatar svg { width: 10px; height: 10px; }
.story .by { font-size: 6px; line-height: 10px; }
.story .bio { font-size: 6px; line-height: 10px; margin-top: 3px; }
```
